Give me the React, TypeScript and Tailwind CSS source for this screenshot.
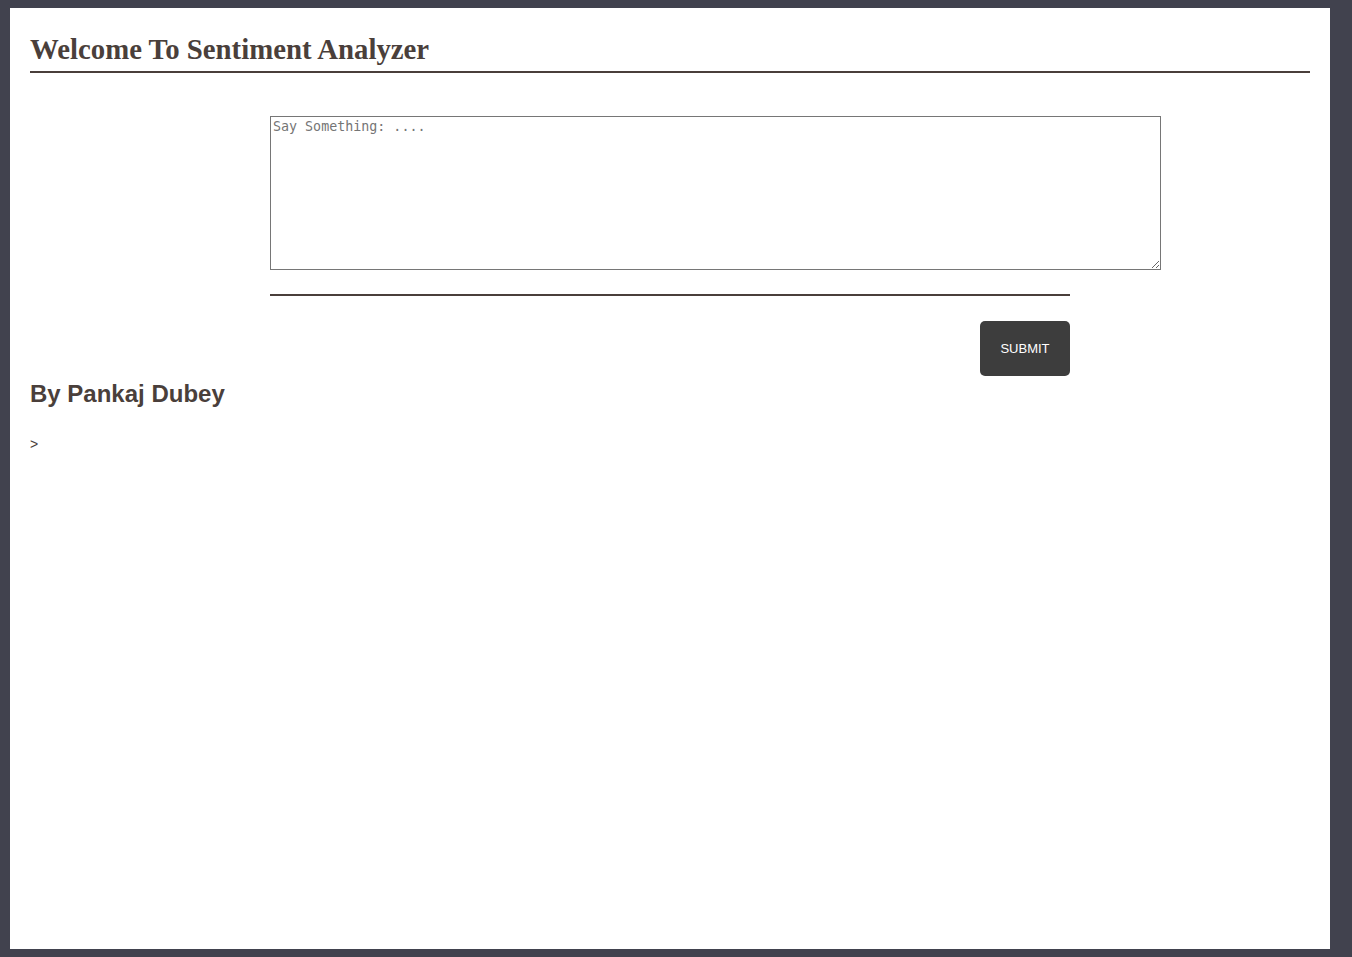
export default function App() {
  return (
    <div className="min-h-[957px] bg-[#41424e] pt-2 pl-[10px] pr-[22px] pb-2 text-[#4a3f3b]">
      <div className="bg-white min-h-[941px] px-5 pt-[25px]">
        <h1 className="font-['Liberation_Serif',serif] font-bold text-[28.8px] leading-[33px] pb-[5px] border-b-2 border-[#4a3f3b]">
          Welcome To Sentiment Analyzer
        </h1>
        <form className="mx-[240px] mt-[43px]" onSubmit={(e) => e.preventDefault()}>
          <textarea
            placeholder="Say Something: ...."
            className="block w-[891px] h-[154px] border border-[#767676] px-[2px] pt-[2px] font-['DejaVu_Sans_Mono',monospace] text-[13.33px] leading-[16px] placeholder:text-[#757575] outline-none"
          />
          <hr className="mt-6 border-t-2 border-[#4a3f3b]" />
          <div className="flex justify-end mt-[25px]">
            <button className="w-[90px] h-[55px] rounded-[5px] bg-[#3d3d3d] text-white font-['Liberation_Sans',sans-serif] text-[13px]">
              SUBMIT
            </button>
          </div>
        </form>
        <h2 className="font-['Liberation_Sans',sans-serif] font-bold text-[24px] leading-[28px] mt-[4px]">
          By Pankaj Dubey
        </h2>
        <p className="font-['Liberation_Sans',sans-serif] text-[14px] mt-[26px]">&gt;</p>
      </div>
    </div>
  );
}
